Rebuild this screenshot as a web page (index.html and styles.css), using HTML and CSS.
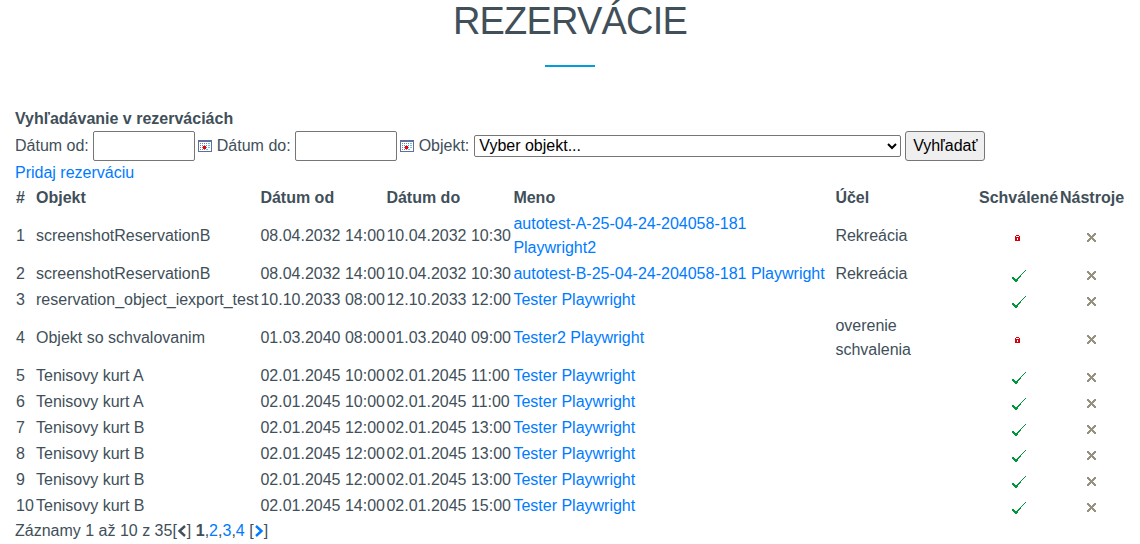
FILE: index.html
```html
<!DOCTYPE html>
<html lang="sk">
<head>
<meta charset="utf-8">
<title>Rezervácie</title>
<link rel="stylesheet" href="styles.css">
<script src="rows.js" defer></script>
</head>
<body>
<svg class="defs" aria-hidden="true">
  <symbol id="calendar" viewBox="0 0 14 12">
    <path fill="#5f719b" d="M0 0h14v12H0z"/>
    <path fill="#fff" d="M1 2h12v9H1z"/>
    <path stroke="#7288a8" stroke-dasharray="1 1" d="M2 3.5h8M2 5.5h8M2 7.5h8M2 9.500h6"/>
    <path stroke="#63c5ef" stroke-dasharray="2 1" d="M10 3.500h3M10 5.500h3M10 7.500h3M8 9.500h3"/>
    <path fill="#e00" d="M5 6h3v3H5z"/>
  </symbol>
  <symbol id="lock" viewBox="0 0 5 6">
    <path fill="#d9000d" d="M1 0h3v1h1v5H0V1h1z"/>
    <path fill="#fff" d="M1 1h3v1H1zM2 3h1v2H2z"/>
  </symbol>
  <symbol id="check" viewBox="0 0 14 12">
    <path fill="#00963c" d="M13 0h1v1h-1zM12 1h1v1h-1zM11 2h1v1h-1zM10 3h1v1h-1zM9 4h1v1H9zM8 5h1v1H8zM7 6h2v1H7zM0 7h2v1H0zM6 7h2v1H6zM0 8h3v1H0zM5 8h2v1H5zM1 9h5v1H1zM2 10h4v1H2zM3 11h2v1H3z"/>
  </symbol>
  <symbol id="cross" viewBox="0 0 9 9">
    <path fill="#96917f" d="M0 0h2v1h1v1h1v1h1V2h1V1h1V0h2v2H8v1H7v1H6v1h1v1h1v1h1v2H7V8H6V7H5V6H4v1H3v1H2v1H0V7h1V6h1V5h1V4H2V3H1V2H0z"/>
  </symbol>
</svg>
<main class="page">
  <h1 class="title">REZERVÁCIE</h1>
  <div class="rule"></div>
  <div class="line"><b>Vyhľadávanie v rezerváciách</b></div>
  <form class="search">
    <label for="from">Dátum od:</label><input id="from" class="date" type="text"><svg class="cal"><use href="#calendar"/></svg>
    <label for="to">Dátum do:</label><input id="to" class="date" type="text"><svg class="cal"><use href="#calendar"/></svg>
    <label for="object">Objekt:</label><select id="object" class="object"><option>Vyber objekt...</option></select><button class="submit" type="button">Vyhľadať</button>
  </form>
  <div class="line"><a href="#">Pridaj rezerváciu</a></div>
  <table class="list">
    <colgroup><col class="c-num"><col class="c-obj"><col class="c-from"><col class="c-to"><col class="c-name"><col class="c-use"><col class="c-ok"><col class="c-tools"></colgroup>
    <thead><tr><th>#</th><th>Objekt</th><th>Dátum od</th><th>Dátum do</th><th>Meno</th><th>Účel</th><th>Schválené</th><th>Nástroje</th></tr></thead>
    <tbody id="rows"></tbody>
  </table>
  <div class="line">Záznamy 1 až 10 z 35[<svg class="chev" viewBox="0 0 10 12"><path d="M8 1 2.500 6 8 11"/></svg>] <b>1</b>,<a href="#">2</a>,<a href="#">3</a>,<a href="#">4</a> [<a href="#"><svg class="chev" viewBox="0 0 10 12"><path d="M2 1 7.500 6 2 11"/></svg></a>]</div>
</main>
</body>
</html>
```
FILE: styles.css
```css
* { box-sizing: border-box; }
body {
  margin: 0;
  background: #fff;
  color: #414f59;
  font: 16px/24px "Liberation Sans", Arial, sans-serif;
  overflow: hidden;
}
a { color: #007bff; text-decoration: none; }
.defs { display: none; }
.page { padding: 0 15px; }
.title {
  margin: 0;
  height: 65px;
  font-size: 38px;
  font-weight: 400;
  line-height: 42px;
  letter-spacing: -.8px;
  text-align: center;
}
.rule { width: 50px; height: 2px; margin: 0 auto 40px; background: #009fdb; }
.line { height: 24px; white-space: nowrap; }
.search { display: flex; align-items: center; height: 30px; }
.search label { white-space: nowrap; }
.date {
  width: 102px;
  height: 30px;
  margin: 0 3px 0 4px;
  border: 1px solid #767676;
  border-radius: 2px;
}
.cal { width: 14px; height: 12px; margin-right: 5px; shape-rendering: crispEdges; }
.object {
  width: 427px;
  height: 22px;
  margin: 0 4px 0 5px;
  padding-bottom: 1px;
  border: 1px solid #767676;
  border-radius: 2px;
  background: #fff;
  color: #000;
  font: 16px "Liberation Sans", Arial, sans-serif;
}
.submit {
  width: 80px;
  height: 30px;
  padding: 0;
  border: 1px solid #767676;
  border-radius: 3px;
  background: #efefef;
  color: #000;
  font: 16px "Liberation Sans", Arial, sans-serif;
}
.list { width: 1110px; table-layout: fixed; border-collapse: collapse; }
.list th, .list td { padding: 1px; text-align: left; white-space: nowrap; }
.list th:nth-child(n+3):nth-child(-n+6), .list td:nth-child(n+3):nth-child(-n+6) { padding-left: .4px; }
.list .icon { text-align: center; }
.c-num { width: 20px; }
.c-obj { width: 225px; }
.c-from { width: 126px; }
.c-to { width: 127px; }
.c-name { width: 322px; }
.c-use { width: 143px; }
.c-ok { width: 81px; }
.c-tools { width: 66px; }
.icon svg { display: block; margin: 4px auto 0; shape-rendering: crispEdges; }
.icon .lock { width: 5px; height: 6px; margin-left: 36px; }
.icon .check { width: 14px; height: 12px; margin-left: 33px; }
.icon .cross { width: 9px; height: 9px; margin-top: 3px; margin-left: 27px; }
.chev { width: 10px; height: 12px; vertical-align: -1px; fill: none; stroke: currentColor; stroke-width: 2.4; }
```
FILE: rows.js
```javascript
const rows = [
  ["screenshotReservationB", "08.04.2032 14:00", "10.04.2032 10:30", "autotest-A-25-04-24-204058-181<br>Playwright2", "Rekreácia", "lock"],
  ["screenshotReservationB", "08.04.2032 14:00", "10.04.2032 10:30", "autotest-B-25-04-24-204058-181 Playwright", "Rekreácia", "check"],
  ["reservation_object_iexport_test", "10.10.2033 08:00", "12.10.2033 12:00", "Tester Playwright", "", "check"],
  ["Objekt so schvalovanim", "01.03.2040 08:00", "01.03.2040 09:00", "Tester2 Playwright", "overenie<br>schvalenia", "lock"],
  ["Tenisovy kurt A", "02.01.2045 10:00", "02.01.2045 11:00", "Tester Playwright", "", "check"],
  ["Tenisovy kurt A", "02.01.2045 10:00", "02.01.2045 11:00", "Tester Playwright", "", "check"],
  ["Tenisovy kurt B", "02.01.2045 12:00", "02.01.2045 13:00", "Tester Playwright", "", "check"],
  ["Tenisovy kurt B", "02.01.2045 12:00", "02.01.2045 13:00", "Tester Playwright", "", "check"],
  ["Tenisovy kurt B", "02.01.2045 12:00", "02.01.2045 13:00", "Tester Playwright", "", "check"],
  ["Tenisovy kurt B", "02.01.2045 14:00", "02.01.2045 15:00", "Tester Playwright", "", "check"]
];
const icon = name => `<td class="icon"><svg class="${name}"><use href="#${name}"/></svg></td>`;
document.getElementById("rows").innerHTML = rows.map(([object, from, to, name, use, state], i) =>
  `<tr><td>${i + 1}</td><td>${object}</td><td>${from}</td><td>${to}</td><td><a href="#">${name}</a></td><td>${use}</td>${icon(state)}${icon("cross")}</tr>`
).join("");
```
